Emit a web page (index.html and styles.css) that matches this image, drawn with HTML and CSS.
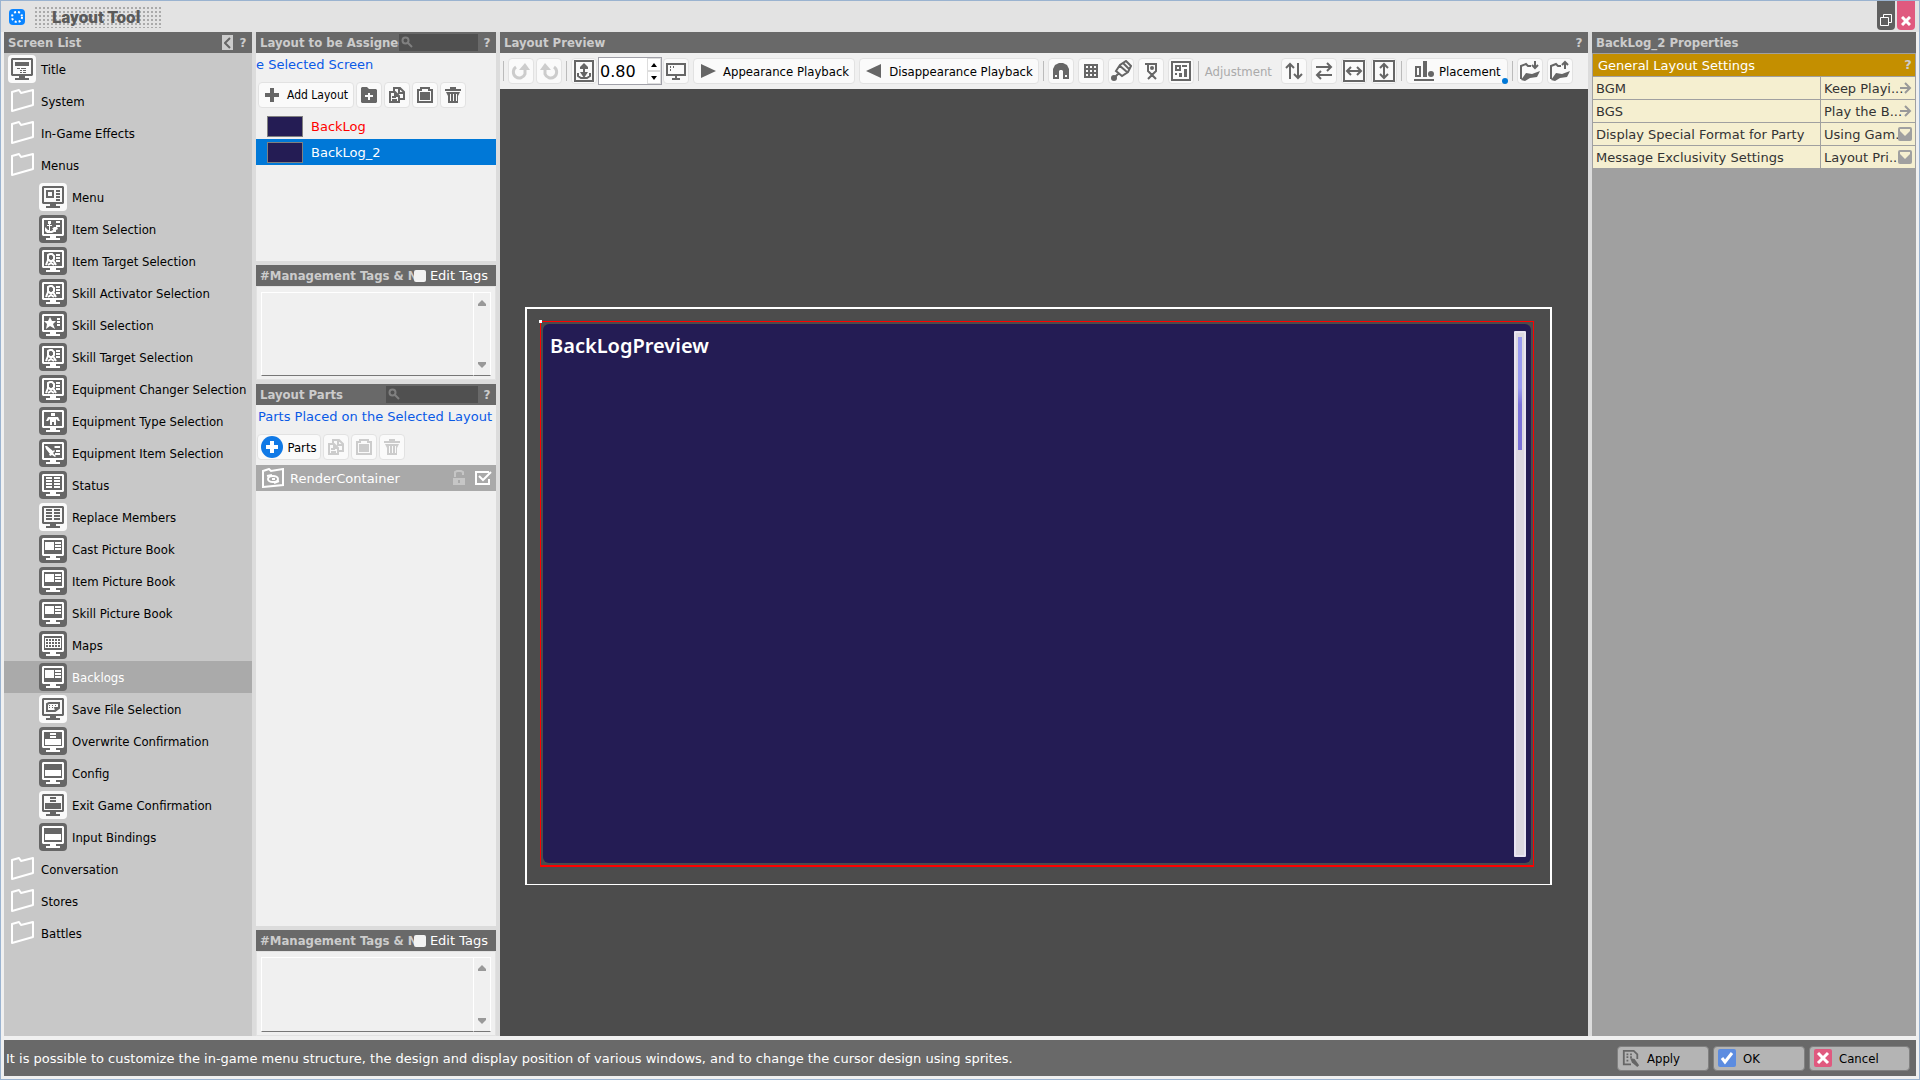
FILE: index.html
```html
<!DOCTYPE html>
<html lang="en">
<head>
<meta charset="utf-8">
<title>Layout Tool</title>
<link rel="stylesheet" href="styles.css">
</head>
<body>
<svg class="sprite" aria-hidden="true">
  <symbol id="monitor" viewBox="0 0 28 28">
    <path fill="currentColor" fill-rule="evenodd" d="M4 3h20l1 1v16l-1 1H17v2h4v2H7v-2h4v-2H4l-1-1V4zM5 5v14h18V5z"/>
  </symbol>
  <symbol id="s-title" viewBox="0 0 28 28"><use href="#monitor"/><path fill="currentColor" d="M7 7h14v4H7zM9 13h3v1H9zM13 13h5v1h-5zM12 15h2v1h-2zM15 15h3v1h-3zM12 17h2v1h-2zM15 17h3v1h-3z"/></symbol>
  <symbol id="s-menu" viewBox="0 0 28 28"><use href="#monitor"/><path fill="currentColor" fill-rule="evenodd" d="M7 7h8v8H7zM9 9v4h4V9zM17 7h4v2h-4zM17 10h4v2h-4zM17 13h4v2h-4zM17 16h4v2h-4z"/></symbol>
  <symbol id="s-item" viewBox="0 0 28 28"><use href="#monitor"/><path fill="currentColor" d="M9 6h3v3h-1v1h2v1h-2v5h1l2-1v-1h-1l2-2h3l1 2-2 1v2h-2l-2 1H8l-2-2v-4l3 3h1v-4H8v-1h2V9H9zM17 6h4v2h-4zM17 10h4v2h-4z"/></symbol>
  <symbol id="s-target" viewBox="0 0 28 28"><use href="#monitor"/><path fill="none" stroke="currentColor" stroke-width="2" d="M9 8l2-1h2l2 2v3l-2 2h-2l-2-2V8zM9 13l-2 5M14 13l3 5M9 18l3-2 3 2"/><path fill="currentColor" d="M17 7h4v2h-4zM17 10h4v2h-4zM17 13h4v2h-4z"/></symbol>
  <symbol id="s-star" viewBox="0 0 28 28"><use href="#monitor"/><path fill="currentColor" d="M11 6l2 4h4l-3 3 2 5-5-3-4 3 1-5-3-3h4zM18 7h3v2h-3zM18 10h3v2h-3zM18 13h3v2h-3z"/></symbol>
  <symbol id="s-body" viewBox="0 0 28 28"><use href="#monitor"/><path fill="currentColor" d="M12 6h4v3h-4zM9 10h10l2 4h-2l-2-2v3h-6v-3l-2 2H7zM11 15h2v3h-2zM15 15h2v3h-2z"/></symbol>
  <symbol id="s-equip" viewBox="0 0 28 28"><use href="#monitor"/><path fill="currentColor" d="M6 7h2l6 5 1-1 1 1-2 2 3 3-1 1-3-2-2 1-1-2h1l-4-5zM15 8l1-1h5v2h-5zM17 11h4v2h-4zM16 14h5v2h-5z"/></symbol>
  <symbol id="s-status" viewBox="0 0 28 28"><use href="#monitor"/><path fill="currentColor" d="M7 6h6v2H7zM15 6h6v2h-6zM7 9h6v2H7zM15 9h6v2h-6zM7 12h6v2H7zM15 12h6v2h-6zM7 15h6v2H7zM15 15h6v2h-6z"/></symbol>
  <symbol id="s-book" viewBox="0 0 28 28"><use href="#monitor"/><path fill="currentColor" d="M6 7h9v8H6zM16 7h6v2h-6zM16 10h6v2h-6zM16 13h6v2h-6z"/></symbol>
  <symbol id="s-maps" viewBox="0 0 28 28"><use href="#monitor"/><path fill="currentColor" fill-rule="evenodd" d="M6 7h16v10H6zM7 8v2h2V8zM10 8v2h2V8zM13 8v2h2V8zM16 8v2h2V8zM19 8v2h2V8zM7 11v2h2v-2zM10 11v2h2v-2zM13 11v2h2v-2zM16 11v2h2v-2zM19 11v2h2v-2zM7 14v2h2v-2zM10 14v2h2v-2zM13 14v2h2v-2zM16 14v2h2v-2zM19 14v2h2v-2z"/></symbol>
  <symbol id="s-save" viewBox="0 0 28 28"><use href="#monitor"/><path fill="none" stroke="currentColor" stroke-width="2" d="M8 9l2-1h10v5l-4 3H8z"/><path fill="currentColor" d="M10 10h1v1h-1zM13 10h1v1h-1zM16 10h1v1h-1zM10 12h1v1h-1zM13 12h1v1h-1zM15 12h5l-4 4z"/></symbol>
  <symbol id="s-over" viewBox="0 0 28 28"><use href="#monitor"/><path fill="currentColor" d="M11 6h6v2h-6zM11 9h6v2h-6zM6 12h16v6H6z"/></symbol>
  <symbol id="s-config" viewBox="0 0 28 28"><use href="#monitor"/><path fill="currentColor" d="M6 11h16v6H6z"/></symbol>
  <symbol id="folder" viewBox="0 0 28 28"><path fill="none" stroke="#fff" stroke-width="2" stroke-linejoin="round" d="M4 5l7-2 2 3 12-3v15L4 24z"/></symbol>
  <symbol id="lens" viewBox="0 0 12 12"><circle cx="4.500" cy="4.500" r="3" fill="none" stroke="currentColor" stroke-width="2"/><path stroke="currentColor" stroke-width="2" d="M7 7l4 4"/></symbol>
  <symbol id="plus" viewBox="0 0 16 16"><path fill="currentColor" d="M6 1h4v5h5v4h-5v5H6v-5H1V6h5z"/></symbol>
  <symbol id="addfolder" viewBox="0 0 18 18"><path fill="currentColor" fill-rule="evenodd" d="M1 2l1-1h5l2 2h7l1 1v12l-1 1H2l-1-1zM8 7v2H5v2h3v3h2v-3h3V9h-3V7z"/></symbol>
  <symbol id="copy" viewBox="0 0 18 18"><path fill="none" stroke="currentColor" stroke-width="2" d="M6 5V2h6l4 4v7h-4M11 2v5h5M2 6h5l4 4v6H2zM7 6v4h4M4 11h4M4 14h5"/></symbol>
  <symbol id="paste" viewBox="0 0 18 18"><path fill="none" stroke="currentColor" stroke-width="2" d="M2 4h3V2h8v2h3v12H2z"/><path fill="currentColor" d="M4 6h10v8H4z"/></symbol>
  <symbol id="trash" viewBox="0 0 18 18"><path fill="currentColor" fill-rule="evenodd" d="M6 1h6v2h5v2H1V3h5zM2 6h14l-2 4v7H4v-7zM6 8v7h1V8zM9 8v7h1V8zM12 8v7h1V8z"/></symbol>
  <symbol id="turn" viewBox="0 0 20 20"><path fill="none" stroke="currentColor" stroke-width="3" d="M5 6a6 6 0 1 0 9 7V7"/><path fill="currentColor" d="M8 9l6-7 5 7z"/></symbol>
</svg>
<div class="window">
  <header class="titlebar">
    <svg class="logo" viewBox="0 0 16 16"><rect width="16" height="16" rx="4" fill="#0a84ff"/><circle cx="8" cy="8" r="5" fill="none" stroke="#fff" stroke-width="2" stroke-dasharray="2 2"/></svg>
    <h1>Layout Tool</h1>
    <div class="winbtns">
      <button class="restore" aria-label="Restore"><svg width="12" height="12" viewBox="0 0 12 12" fill="none" stroke="#fff"><path d="M.5 3.500h8v8h-8zM3.500 3V.5h8v8H9"/></svg></button>
      <button class="close" aria-label="Close"><svg width="10" height="10" viewBox="0 0 10 10" stroke="#fff" stroke-width="3"><path d="M1 1l8 8M9 1L1 9"/></svg></button>
    </div>
  </header>

  <main class="columns">
    <nav class="screens">
      <div class="head"><h2>Screen List</h2><button class="fold" aria-label="Collapse"><svg width="7" height="12" viewBox="0 0 7 12" fill="none" stroke="#666" stroke-width="2"><path d="M6 1L1 6l5 5"/></svg></button><button class="help">?</button></div>
      <ul class="tree">
        <li><button><svg class="ico light"><use href="#s-title"/></svg>Title</button></li>
        <li><button><svg class="ico"><use href="#folder"/></svg>System</button></li>
        <li><button><svg class="ico"><use href="#folder"/></svg>In-Game Effects</button></li>
        <li><button><svg class="ico"><use href="#folder"/></svg>Menus</button>
          <ul>
            <li><button><svg class="ico light"><use href="#s-menu"/></svg>Menu</button></li>
            <li><button><svg class="ico dark"><use href="#s-item"/></svg>Item Selection</button></li>
            <li><button><svg class="ico dark"><use href="#s-target"/></svg>Item Target Selection</button></li>
            <li><button><svg class="ico dark"><use href="#s-target"/></svg>Skill Activator Selection</button></li>
            <li><button><svg class="ico dark"><use href="#s-star"/></svg>Skill Selection</button></li>
            <li><button><svg class="ico dark"><use href="#s-target"/></svg>Skill Target Selection</button></li>
            <li><button><svg class="ico dark"><use href="#s-target"/></svg>Equipment Changer Selection</button></li>
            <li><button><svg class="ico dark"><use href="#s-body"/></svg>Equipment Type Selection</button></li>
            <li><button><svg class="ico dark"><use href="#s-equip"/></svg>Equipment Item Selection</button></li>
            <li><button><svg class="ico dark"><use href="#s-status"/></svg>Status</button></li>
            <li><button><svg class="ico light"><use href="#s-status"/></svg>Replace Members</button></li>
            <li><button><svg class="ico dark"><use href="#s-book"/></svg>Cast Picture Book</button></li>
            <li><button><svg class="ico dark"><use href="#s-book"/></svg>Item Picture Book</button></li>
            <li><button><svg class="ico dark"><use href="#s-book"/></svg>Skill Picture Book</button></li>
            <li><button><svg class="ico dark"><use href="#s-maps"/></svg>Maps</button></li>
            <li><button class="current"><svg class="ico dark"><use href="#s-book"/></svg>Backlogs</button></li>
            <li><button><svg class="ico light"><use href="#s-save"/></svg>Save File Selection</button></li>
            <li><button><svg class="ico dark"><use href="#s-over"/></svg>Overwrite Confirmation</button></li>
            <li><button><svg class="ico dark"><use href="#s-config"/></svg>Config</button></li>
            <li><button><svg class="ico light"><use href="#s-over"/></svg>Exit Game Confirmation</button></li>
            <li><button><svg class="ico dark"><use href="#s-config"/></svg>Input Bindings</button></li>
          </ul>
        </li>
        <li><button><svg class="ico"><use href="#folder"/></svg>Conversation</button></li>
        <li><button><svg class="ico"><use href="#folder"/></svg>Stores</button></li>
        <li><button><svg class="ico"><use href="#folder"/></svg>Battles</button></li>
      </ul>
    </nav>

    <div class="middle">
      <section class="panel layouts">
        <div class="head"><h2>Layout to be Assigned</h2><label class="search short"><svg><use href="#lens"/></svg><input type="search" aria-label="Search layouts"></label><button class="help">?</button></div>
        <p class="scope">e Selected Screen</p>
        <div class="tools">
          <button class="tool wide"><svg class="sm"><use href="#plus"/></svg>Add Layout</button>
          <button class="tool" aria-label="Add folder"><svg><use href="#addfolder"/></svg></button>
          <button class="tool" aria-label="Copy"><svg><use href="#copy"/></svg></button>
          <button class="tool" aria-label="Paste"><svg><use href="#paste"/></svg></button>
          <button class="tool" aria-label="Delete"><svg><use href="#trash"/></svg></button>
        </div>
        <ul class="rows">
          <li><button class="initial"><span class="thumb"></span>BackLog</button></li>
          <li><button class="selected"><span class="thumb"></span>BackLog_2</button></li>
        </ul>
      </section>
      <section class="panel tags">
        <div class="head"><h2>#Management Tags &amp; N</h2><label class="edit"><input type="checkbox">Edit Tags</label></div>
        <div class="note"><textarea aria-label="Layout tags and notes"></textarea><div class="bar"><svg viewBox="0 0 8 6"><path d="M4 0l4 4v2H0V4z"/></svg><svg viewBox="0 0 8 6"><path d="M0 0h8v2L4 6 0 2z"/></svg></div></div>
      </section>
      <section class="panel parts">
        <div class="head"><h2>Layout Parts</h2><label class="search"><svg><use href="#lens"/></svg><input type="search" aria-label="Search parts"></label><button class="help">?</button></div>
        <p class="scope">Parts Placed on the Selected Layout</p>
        <div class="tools">
          <button class="tool add"><svg viewBox="0 0 22 22"><circle cx="11" cy="11" r="11" fill="#1079e6"/><path fill="#fff" d="M9 5h4v4h4v4h-4v4H9v-4H5V9h4z"/></svg>Parts</button>
          <button class="tool" disabled aria-label="Copy part"><svg><use href="#copy"/></svg></button>
          <button class="tool" disabled aria-label="Paste part"><svg><use href="#paste"/></svg></button>
          <button class="tool" disabled aria-label="Delete part"><svg><use href="#trash"/></svg></button>
        </div>
        <div class="part">
          <svg width="24" height="20" viewBox="0 0 24 20" fill="none" stroke="#fff" stroke-width="2"><path d="M2 3l6-2 2 2 12-2v16L2 19z"/><ellipse cx="12" cy="11" rx="5" ry="3"/><path d="M6 8l5-1M18 13l-5 2M11 11h3"/></svg>
          <span>RenderContainer</span>
          <svg width="12" height="16" viewBox="0 0 12 16"><path fill="none" stroke="#c6c6c6" stroke-width="2" d="M2 7V2l2-1h4l2 1v3"/><path fill="#c6c6c6" fill-rule="evenodd" d="M0 8h12v7H0zM5 10v3h2v-3z"/></svg>
          <svg width="17" height="16" viewBox="0 0 17 16" fill="none" stroke="#fff" stroke-width="2"><path d="M14 9v5H1V2h13M4 6l4 4 8-8"/></svg>
        </div>
      </section>
      <section class="panel tags">
        <div class="head"><h2>#Management Tags &amp; N</h2><label class="edit"><input type="checkbox">Edit Tags</label></div>
        <div class="note low"><textarea aria-label="Part tags and notes"></textarea><div class="bar"><svg viewBox="0 0 8 6"><path d="M4 0l4 4v2H0V4z"/></svg><svg viewBox="0 0 8 6"><path d="M0 0h8v2L4 6 0 2z"/></svg></div></div>
      </section>
    </div>

    <section class="preview">
      <div class="head"><h2>Layout Preview</h2><button class="help">?</button></div>
      <div class="toolbar">
        <i class="sep"></i>
        <div class="history">
          <button class="tool" disabled aria-label="Undo"><svg><use href="#turn"/></svg></button>
          <button class="tool" disabled aria-label="Redo"><svg class="flip"><use href="#turn"/></svg></button>
        </div>
        <i class="sep"></i>
        <div class="scale">
          <button class="tool" aria-label="Fit"><svg class="big" viewBox="0 0 22 22"><path fill="none" stroke="#666" stroke-width="2" d="M2 1h18v20H2zM11 4v10M7 8h8M5 13v3l3 2h6l3-2v-3"/><path fill="#666" d="M11 3l4 4H7zM7 12h8l-4 6z"/></svg></button>
          <div class="zoom"><input type="text" value="0.80" aria-label="Zoom"><span><button aria-label="Zoom in"><svg viewBox="0 0 6 4"><path d="M3 0l3 4H0z"/></svg></button><button aria-label="Zoom out"><svg viewBox="0 0 6 4"><path d="M0 0h6L3 4z"/></svg></button></span></div>
          <button class="tool" aria-label="Screen"><svg class="big" viewBox="0 0 22 22"><path fill="none" stroke="#666" stroke-width="2" d="M2 4h18v11H2zM11 15v4M7 19h8M5 7h1M8 7h1M5 10h1"/></svg></button>
        </div>
        <button class="tool play"><svg viewBox="0 0 18 18"><path fill="#666" d="M2 2l15 7-15 7z"/></svg>Appearance Playback</button>
        <button class="tool play"><svg viewBox="0 0 18 18"><path fill="#666" d="M16 2L1 9l15 7z"/></svg>Disappearance Playback</button>
        <i class="sep"></i>
        <button class="tool" aria-label="Snap"><svg viewBox="0 0 18 18"><path fill="#666" fill-rule="evenodd" d="M1 17V7l2-4 4-2h4l4 2 2 4v10h-6V9l-1-1H8L7 9v8zM3 13v2h2v-2zM13 13v2h2v-2z"/></svg></button>
        <button class="tool" aria-label="Grid"><svg viewBox="0 0 18 18"><path fill="none" stroke="#666" stroke-width="2" d="M3 3h12v12H3zM7 2v14M11 2v14M2 7h14M2 11h14"/></svg></button>
        <button class="tool" aria-label="Brush"><svg class="big" viewBox="0 0 22 22"><path fill="none" stroke="#666" stroke-width="2" d="M16 1l5 5-3 6-6 4-6-5 4-6zM10 6l7 6M13 3l6 6M9 13l-4 4"/><circle cx="4" cy="18" r="3" fill="#666"/></svg></button>
        <button class="tool" aria-label="Camera"><svg viewBox="0 0 18 18"><path fill="none" stroke="#666" stroke-width="2" d="M6 2h8v7l-3 3H9L6 9zM3 2h3M6 17l4-4 4 4"/><circle cx="10" cy="6" r="2" fill="#666"/></svg></button>
        <button class="tool" aria-label="Frame"><svg class="big" viewBox="0 0 22 22"><path fill="none" stroke="#666" stroke-width="2" d="M2 2h18v18H2zM6 6h4v4H6z"/><path fill="#666" d="M12 5h5v2h-5zM14 9h3v8h-3zM5 13h2v2H5zM9 13h3v4H9z"/></svg></button>
        <i class="sep"></i>
        <span class="caption">Adjustment</span>
        <button class="tool" aria-label="Flip vertical"><svg viewBox="0 0 18 18"><path fill="none" stroke="#666" stroke-width="2" d="M5 17V2M1 6l4-4 4 4M13 1v15M9 12l4 4 4-4"/></svg></button>
        <button class="tool" aria-label="Flip horizontal"><svg viewBox="0 0 18 18"><path fill="none" stroke="#666" stroke-width="2" d="M1 5h15M12 1l4 4-4 4M17 13H2M6 9l-4 4 4 4"/></svg></button>
        <button class="tool" aria-label="Fit width"><svg class="big" viewBox="0 0 22 22"><path fill="none" stroke="#666" stroke-width="2" d="M1 1h20v20H1zM4 11h14M8 7l-4 4 4 4M14 7l4 4-4 4"/></svg></button>
        <button class="tool" aria-label="Fit height"><svg class="big" viewBox="0 0 22 22"><path fill="none" stroke="#666" stroke-width="2" d="M1 1h20v20H1zM11 4v14M7 8l4-4 4 4M7 14l4 4 4-4"/></svg></button>
        <i class="sep"></i>
        <button class="tool place"><svg class="big" viewBox="0 0 22 22"><path fill="none" stroke="#666" stroke-width="2" d="M1 20h20M3 7h4v9H3z"/><path fill="#666" d="M10 1h4v16h-4z"/><circle cx="18" cy="14" r="3" fill="#666"/></svg>Placement<i class="dot"></i></button>
        <i class="sep"></i>
        <button class="tool" aria-label="Import"><svg class="big" viewBox="0 0 22 22"><path fill="none" stroke="#666" stroke-width="2" d="M12 6H9L7 4 2 6v13M16 1v6M13 5l3 3 3-3"/><path fill="#666" d="M2 20l5-7 6 1 8-3-3 6-7 1-5 3z"/></svg></button>
        <button class="tool" aria-label="Export"><svg class="big" viewBox="0 0 22 22"><path fill="none" stroke="#666" stroke-width="2" d="M12 6H9L7 4 2 6v13M16 9V2M13 5l3-3 3 3"/><path fill="#666" d="M2 20l5-7 6 1 8-3-3 6-7 1-5 3z"/></svg></button>
      </div>
      <div class="canvas">
        <div class="frame">
          <div class="bounds">
            <div class="log"><p>BackLogPreview</p><div class="track"><div class="thumbbar"></div></div></div>
          </div>
        </div>
      </div>
    </section>

    <aside class="props">
      <div class="head"><h2>BackLog_2 Properties</h2></div>
      <div class="group"><span>General Layout Settings</span><button class="help">?</button></div>
      <table>
        <tr><th scope="row">BGM</th><td><button>Keep Playi...<svg width="13" height="12" viewBox="0 0 13 12"><path fill="none" stroke="#999" stroke-width="2" d="M1 6h10M6 1l5 5-5 5"/></svg></button></td></tr>
        <tr><th scope="row">BGS</th><td><button>Play the B...<svg width="13" height="12" viewBox="0 0 13 12"><path fill="none" stroke="#999" stroke-width="2" d="M1 6h10M6 1l5 5-5 5"/></svg></button></td></tr>
        <tr><th scope="row"><label for="party">Display Special Format for Party</label></th><td><div class="pick"><select id="party"><option>Using Gam...</option></select><svg width="14" height="14" viewBox="0 0 14 14"><rect width="14" height="14" rx="2" fill="#a0a0a0"/><path fill="#f5efd0" d="M2 2h10v2l-5 5-5-5z"/></svg></div></td></tr>
        <tr><th scope="row"><label for="message">Message Exclusivity Settings</label></th><td><div class="pick"><select id="message"><option>Layout Pri...</option></select><svg width="14" height="14" viewBox="0 0 14 14"><rect width="14" height="14" rx="2" fill="#a0a0a0"/><path fill="#f5efd0" d="M2 2h10v2l-5 5-5-5z"/></svg></div></td></tr>
      </table>
    </aside>
  </main>

  <footer class="status">
    <p>It is possible to customize the in-game menu structure, the design and display position of various windows, and to change the cursor design using sprites.</p>
    <button><svg viewBox="0 0 20 20"><path fill="none" stroke="#666" stroke-width="2" d="M10 17H2V2h11l4 4v5M5 6h2M9 6h2M5 9h2M9 9h2M5 13h2"/><path fill="#666" d="M9 10l5 1 5 7-2 2-6-5z"/></svg>Apply</button>
    <button><svg viewBox="0 0 18 18"><rect width="18" height="18" rx="2" fill="#5c8ce0"/><path fill="none" stroke="#fff" stroke-width="3" d="M4 9l3 4 7-9"/></svg>OK</button>
    <button class="last"><svg viewBox="0 0 18 18"><rect width="18" height="18" rx="2" fill="#e0597f"/><path stroke="#fff" stroke-width="3" d="M4 4l10 10M14 4L4 14"/></svg>Cancel</button>
  </footer>
</div>
</body>
</html>
```
FILE: styles.css
```css
* { box-sizing: border-box; }
body {
  margin: 0;
  color: #000;
  font-family: "DejaVu Sans", sans-serif;
  font-size: 12px;
}
h1, h2, p, ul { margin: 0; padding: 0; }
ul { list-style: none; }
button, input, select, textarea { margin: 0; padding: 0; border: 0; background: none; color: inherit; font: inherit; }
svg { flex: none; display: block; }
.sprite { position: absolute; width: 0; height: 0; }

.window {
  display: grid;
  grid-template-rows: 31px minmax(0, 1fr) 36px;
  min-height: 100vh;
  padding-bottom: 3px;
  border: 1px solid #9ab3d0;
  background: #f0f0f0;
}

.titlebar { display: flex; align-items: center; padding-left: 8px; background: #e3e3e3; }
.logo { width: 16px; height: 16px; }
.titlebar h1 {
  width: 127px;
  height: 22px;
  margin-left: 9px;
  padding-left: 18px;
  background: radial-gradient(#aaa 1px, transparent 1px) 0 0 / 4px 4px;
  color: #5a5a5a;
  font: 900 17px/22px Roboto, "Liberation Sans", sans-serif;
  white-space: nowrap;
}
.winbtns { display: flex; gap: 2px; align-self: flex-start; margin-left: auto; padding-right: 4px; }
.winbtns button {
  display: flex;
  align-items: flex-end;
  justify-content: center;
  width: 18px;
  height: 29px;
  padding-bottom: 4px;
  border-radius: 0 0 4px 4px;
}
.restore { background: #5f5f5f; }
.close { background: #e0597f; }

.columns {
  display: grid;
  grid-template-columns: 248px 240px minmax(0, 1fr) 324px;
  gap: 4px;
  margin: 0 3px 4px;
  background: #dcdcdc;
}
.head {
  display: flex;
  align-items: center;
  height: 21px;
  padding: 0 4px;
  background: #696969;
  color: #ccc;
}
.head h2 {
  flex: 1;
  min-width: 0;
  overflow: hidden;
  font: bold 13px/21px "DejaVu Sans Condensed", "DejaVu Sans", sans-serif;
  white-space: nowrap;
}
.help { width: 10px; color: #ccc; font-weight: bold; line-height: 16px; }
.fold { display: grid; place-items: center; width: 11px; height: 15px; margin-right: 5px; background: #ccc; }

.screens { background: #c8c8c8; }
.tree { font: 13px "DejaVu Sans Condensed", "DejaVu Sans", sans-serif; }
.tree button { display: flex; align-items: center; gap: 5px; width: 100%; height: 32px; padding-left: 4px; text-align: left; }
.tree ul button { padding-left: 35px; }
.ico { width: 28px; height: 28px; border-radius: 4px; }
.light { background: #fafafa; color: #666; }
.dark { background: #666; color: #fff; }
.tree .current { background: #aaa; color: #fff; }

.middle { display: flex; flex-direction: column; gap: 4px; }
.panel { background: #f0f0f0; }
.layouts { height: 229px; }
.parts { flex: 1; }
.search {
  display: flex;
  width: 92px;
  height: 17px;
  margin-right: 4px;
  padding: 2px;
  background: #505050;
  color: #808080;
}
.search svg { width: 12px; height: 12px; }
.search input { width: 100%; min-width: 0; }
.short { width: 79px; }
.scope { height: 29px; padding-left: 2px; color: #0a5ae6; font-size: 13px; line-height: 23px; white-space: nowrap; }
.layouts .scope { padding-left: 0; }
.tools { display: flex; gap: 2px; padding-left: 1px; }
.layouts .tools { padding-left: 2px; }
.tool {
  display: flex;
  flex: none;
  align-items: center;
  justify-content: center;
  width: 26px;
  height: 26px;
  border: 1px solid #e2e2e2;
  border-radius: 4px;
  background: #fafafa;
  color: #666;
  white-space: nowrap;
}
.tool svg { width: 18px; height: 18px; }
.tool .sm { width: 16px; height: 16px; color: #666; }
.tool .big, .add svg { width: 22px; height: 22px; }
.tool:disabled { color: #ccc; }
.wide, .add, .play, .place, .caption { font-family: "DejaVu Sans Condensed", "DejaVu Sans", sans-serif; }
.wide, .add, .play, .place { width: auto; color: #000; }
.add, .play, .place, .caption { font-size: 13px; }
.wide { width: 96px; gap: 7px; }
.add { width: 64px; gap: 4px; }
.rows { margin-top: 5px; font-size: 13px; }
.rows button { display: flex; align-items: center; gap: 8px; width: 100%; height: 26px; padding-left: 11px; text-align: left; }
.thumb { width: 36px; height: 21px; border: 1px solid #808080; background: #241c54; }
.rows .initial { color: #f00; }
.rows .selected { background: #0078d7; color: #fff; }
.edit { display: flex; align-items: center; gap: 4px; padding-right: 4px; color: #fff; font-size: 13px; }
.edit input { appearance: none; width: 12px; height: 12px; border-radius: 2px; background: #f2f2f2; }
.note { display: flex; height: 94px; padding: 5px 4px 3px; border: 1px solid #e2e2e2; }
.low { height: 85px; }
.note textarea { flex: 1; min-width: 0; resize: none; border: 1px solid #fff; border-bottom-color: #777; }
.bar { display: flex; flex-direction: column; justify-content: space-between; align-items: center; width: 17px; padding: 7px 0; border: 1px solid #fff; border-left: 0; border-bottom-color: #777; }
.bar svg { width: 8px; height: 6px; fill: #999; }
.part { display: flex; align-items: center; gap: 5px; height: 26px; margin-top: 5px; padding: 0 4px 0 5px; background: #a9a9a9; color: #fff; font-size: 13px; }
.part span { flex: 1; }
.part svg + svg { margin-left: 5px; }

.preview { display: flex; flex-direction: column; min-width: 0; background: #4c4c4c; }
.toolbar { display: flex; align-items: center; gap: 4px; height: 36px; padding-left: 3px; background: #f0f0f0; }
.sep { width: 1px; height: 20px; background: #bbb; }
.history { display: flex; gap: 2px; }
.scale { display: flex; align-items: center; gap: 1px; }
.history .tool svg { width: 20px; height: 20px; }
.history .flip { transform: scaleX(-1); }
.zoom { display: flex; width: 64px; height: 28px; border: 1px solid #a0a0a8; background: #fff; }
.zoom input { flex: 1; min-width: 0; padding-left: 1px; font-size: 16px; }
.zoom span { display: grid; width: 14px; }
.zoom button { display: grid; place-items: center; border: 1px solid #ddd; }
.zoom svg { width: 6px; height: 4px; }
.play { gap: 6px; padding: 0 5px; }
.place { position: relative; gap: 4px; width: 102px; }
.dot { position: absolute; right: -1px; bottom: -1px; width: 6px; height: 6px; border-radius: 3px; background: #0078d7; }
.caption { width: 74px; padding-left: 2px; color: #aaa; }
.canvas { flex: 1; padding: 218px 36px 0 25px; }
.frame { aspect-ratio: 16 / 9; padding: 12px 16px 17px 13px; border: 2px solid #fff; border-bottom-width: 1px; }
.bounds { position: relative; height: 100%; padding: 2px; border: 1px solid #f00; border-bottom-width: 2px; }
.bounds::before { content: ""; position: absolute; left: -2px; top: -2px; width: 3px; height: 3px; background: #fff; }
.log { display: flex; justify-content: space-between; height: 100%; padding: 7px 5px 6px 7px; border-radius: 6px; background: #241c54; }
.log p { color: #fff; font: 600 20px/30px "Noto Sans", sans-serif; }
.track { width: 12px; padding: 4px 2px; border: 2px solid #e9e4f2; border-radius: 1px; background: #dcd8e0; }
.thumbbar { height: 22%; background: linear-gradient(#9a9af0 45%, #7a70d8 60%); }

.props { background: #a0a0a0; color: #333; font-size: 13px; }
.group { display: flex; align-items: center; justify-content: space-between; height: 23px; margin: 0 1px; padding: 0 2px 0 5px; border-top: 1px solid #a0a0a0; background: #c48f00; color: #fff; }
.props table { width: 100%; border-spacing: 1px; table-layout: fixed; }
.props th, .props td { height: 22px; padding: 0 3px; background: #f5efd0; font-weight: normal; text-align: left; white-space: nowrap; }
.props td { width: 94px; }
.props td button, .pick { display: flex; align-items: center; justify-content: space-between; width: 100%; }
.pick select { flex: 1; min-width: 0; appearance: none; overflow: hidden; }
.props td svg { margin-left: -4px; }

.status { display: flex; align-items: center; gap: 4px; margin: 0 3px; padding: 0 6px 0 2px; background: #696969; }
.status p { flex: 1; color: #fff; font-size: 13px; }
.status button { display: flex; align-items: center; gap: 7px; width: 92px; height: 25px; padding-left: 4px; border: 1px solid #808080; border-radius: 4px; background: #b4b4b4; font: 13px "DejaVu Sans Condensed", "DejaVu Sans", sans-serif; }
.status button svg { width: 18px; height: 18px; }
.status .last { width: 101px; }
```
